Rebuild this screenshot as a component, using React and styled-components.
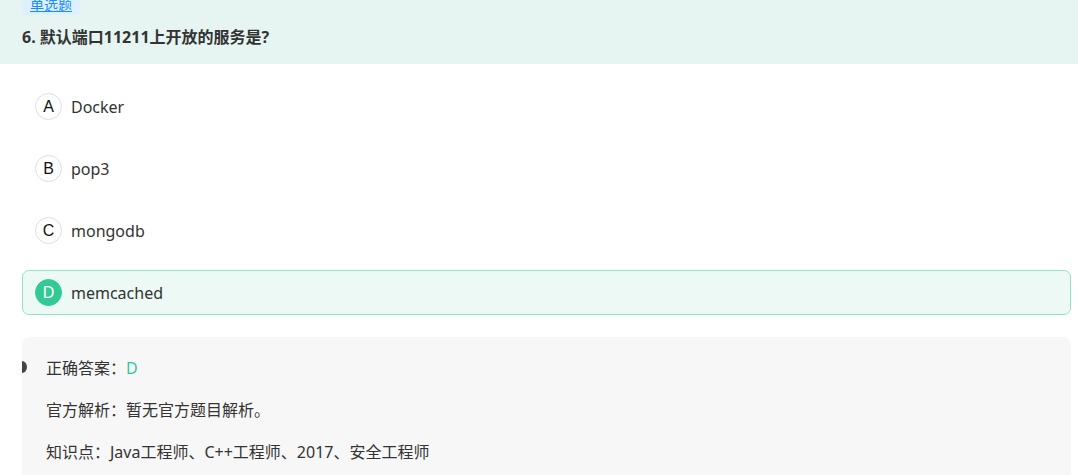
import styled, { createGlobalStyle } from "styled-components";

const GlobalStyle = createGlobalStyle`
  body {
    margin: 0;
    background: #fff;
    font-family: "Microsoft YaHei", "Noto Sans", "Noto Sans CJK SC", sans-serif;
    color: #333;
  }
`;

const options = [
  { key: "A", text: "Docker" },
  { key: "B", text: "pop3" },
  { key: "C", text: "mongodb" },
  { key: "D", text: "memcached", correct: true },
];

const App = () => {
  return (
    <Page>
      <GlobalStyle />
      <Header>
        <Tag>单选题</Tag>
        <Title>6. 默认端口11211上开放的服务是?</Title>
      </Header>
      <OptionList>
        {options.map((o) => (
          <Option key={o.key} $correct={o.correct}>
            <Letter $correct={o.correct}>{o.key}</Letter>
            <OptionText>{o.text}</OptionText>
          </Option>
        ))}
      </OptionList>
      <Analysis>
        <Dot />
        <Line>
          正确答案：<Answer>D</Answer>
        </Line>
        <Line>官方解析：暂无官方题目解析。</Line>
        <Line>知识点：Java工程师、C++工程师、2017、安全工程师</Line>
      </Analysis>
    </Page>
  );
};

export default App;

const Page = styled.div`
  width: 1078px;
  height: 475px;
  overflow: hidden;
`;

const Header = styled.div`
  background: #e6f5f2;
  height: 64px;
  padding: 0 22px;
  box-sizing: border-box;
  display: flex;
  flex-direction: column;
  align-items: flex-start;
`;

const Tag = styled.span`
  margin-top: -6px;
  background: #ddf0fe;
  color: #1a8cff;
  font-size: 14px;
  line-height: 21px;
  padding: 0 8px;
  border-radius: 3px;
  text-decoration: underline;
  text-decoration-thickness: 1px;
  text-underline-offset: 1px;
`;

const Title = styled.div`
  font-size: 16px;
  font-weight: bold;
  color: #333;
  margin-top: 10px;
  line-height: 24px;
`;

const OptionList = styled.div`
  display: flex;
  flex-direction: column;
  gap: 17px;
  padding: 20px 7px 0 22px;
`;

const Option = styled.div`
  display: flex;
  align-items: center;
  gap: 9px;
  height: 45px;
  box-sizing: border-box;
  padding: 0 12px;
  border-radius: 7px;
  border: 1px solid ${(p) => (p.$correct ? "#92e3c6" : "transparent")};
  background: ${(p) => (p.$correct ? "#ecf9f5" : "transparent")};
`;

const Letter = styled.span`
  width: 27px;
  height: 27px;
  border-radius: 50%;
  box-sizing: border-box;
  border: 1px solid ${(p) => (p.$correct ? "#31c995" : "#ddd")};
  background: ${(p) => (p.$correct ? "#31c995" : "#fff")};
  color: ${(p) => (p.$correct ? "#fff" : "#111")};
  display: flex;
  align-items: center;
  justify-content: center;
  font-size: 16px;
  font-family: "Liberation Sans", "Noto Sans", sans-serif;
`;

const OptionText = styled.span`
  font-size: 16px;
  color: #333;
`;

const Analysis = styled.div`
  position: relative;
  margin: 22px 7px 0 22px;
  background: #f7f7f7;
  border-radius: 8px;
  padding: 20px 24px 40px;
  display: flex;
  flex-direction: column;
  gap: 20px;
  overflow: hidden;
`;

const Dot = styled.span`
  position: absolute;
  left: -5px;
  top: 24px;
  width: 10px;
  height: 12px;
  border-radius: 50%;
  background: #444;
`;

const Line = styled.div`
  font-size: 16px;
  line-height: 22px;
  color: #333;
`;

const Answer = styled.span`
  color: #31c995;
`;
